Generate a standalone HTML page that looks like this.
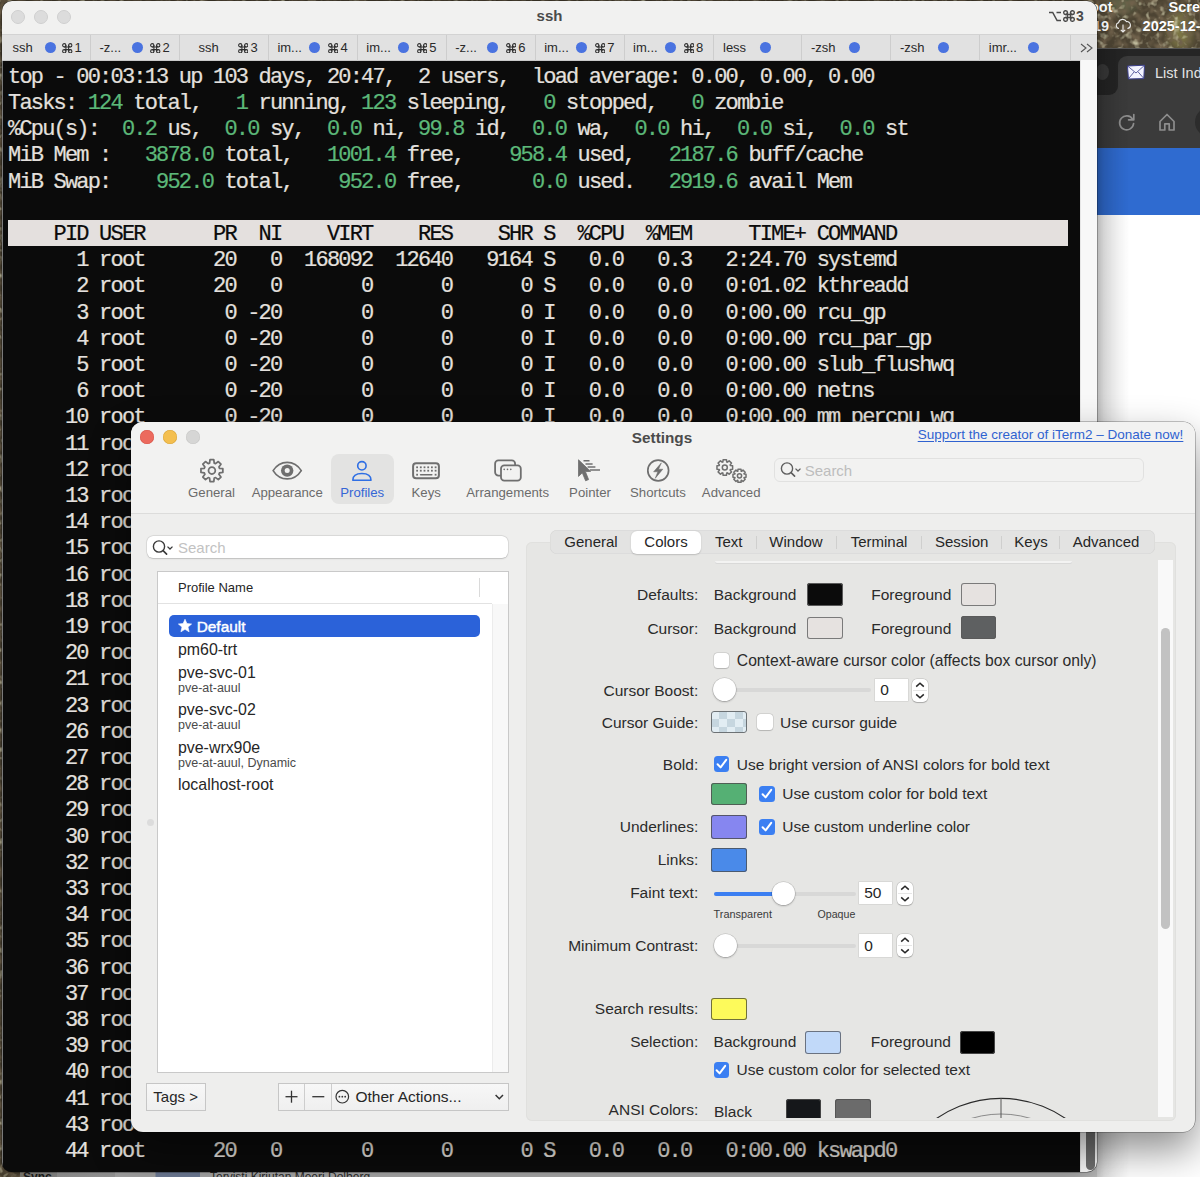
<!DOCTYPE html>
<html><head><meta charset="utf-8">
<style>
*{margin:0;padding:0;box-sizing:border-box}
html,body{width:1200px;height:1177px;overflow:hidden;background:#6b6a55}
body{position:relative;font-family:"Liberation Sans",sans-serif}
.abs{position:absolute}
/* wallpaper */
#wall{position:absolute;left:0;top:0;width:1200px;height:1177px}
#browser{position:absolute;left:1090px;top:48px;width:120px;height:1129px;background:#fff;border-top:1px solid #575757;overflow:hidden}
#btabs{position:absolute;left:0;top:0;width:120px;height:47px;background:#252525}
#btab{position:absolute;left:28px;top:7px;width:100px;height:50px;background:#3b3b3b;border-radius:9px 0 0 0}
#bfoot{position:absolute;left:0;top:30px;width:28px;height:17px;background:#3b3b3b}
#bfoot2{position:absolute;left:0;top:0px;width:28px;height:46px;background:#252525;border-radius:0 0 9px 0}
#btool{position:absolute;left:0;top:46px;width:120px;height:53px;background:#3b3b3b}
#bblue{position:absolute;left:0;top:98.6px;width:120px;height:67px;background:#2f6bd0}
#bottomstrip{position:absolute;left:20px;top:1165px;width:1077px;height:12px;background:linear-gradient(90deg,#8d8a80 0,#9a9a9a 37px,#a9a9a9 37px,#b4b4b4 95px,#c4c4c4 95px,#c4c4c4 135px,#8595b5 136px,#8595b5 180px,#c9c9c9 180px)}
/* terminal window */
#term{position:absolute;left:2px;top:1px;width:1095px;height:1170.5px;border-radius:10px;overflow:hidden;background:#0b0b0b;box-shadow:0 0 0 0.5px rgba(0,0,0,.5),0 10px 30px rgba(0,0,0,.3)}
#ttitle{position:absolute;left:0;top:0;width:100%;height:33px;background:#f1f1f0}
#ttabs{position:absolute;left:0;top:33px;width:100%;height:27px;background:#e1e1e1;border-top:1px solid #d3d3d3;border-bottom:1px solid #c9c9c9}
.tl{position:absolute;top:9px;width:14px;height:14px;border-radius:50%;background:#dcdcdc;border:1px solid #cfcfcf}
#tname{position:absolute;left:0;top:6px;width:1095px;text-align:center;font-weight:bold;font-size:15px;line-height:17px;color:#4a4a4a}
#tshort{position:absolute;left:1084px;top:8.5px;font-size:14px;line-height:14px;font-weight:bold;color:#4a4a4a}
.tab{position:absolute;top:0;height:26px;font-size:13px;color:#2a2a2a;border-left:1px solid #cdcdcd}
.tab span{position:absolute;top:5px;white-space:nowrap}
.dot{position:absolute;top:7px;width:11px;height:11px;border-radius:50%;background:#4a73e0}
#tcontent{position:absolute;left:0;top:60px;width:1078px;height:1111px;background:#0b0b0b}
#tscroll{position:absolute;left:1078px;top:59px;width:17px;height:1112px;background:#f8f8f8;border-left:1px solid #e6e6e6}
#tthumb{position:absolute;left:5px;bottom:2px;width:9px;height:90px;border-radius:5px;background:#6f6f6f}
.r{position:absolute;left:6px;height:26.2px;line-height:29.2px;-webkit-text-stroke:0.22px currentColor;white-space:pre;font-family:"Liberation Mono",monospace;font-size:22px;letter-spacing:-1.813px;color:#e4e0de}
.r b{font-weight:normal;color:#5cb879}
.r.hd{background:#e4e0de;color:#0b0b0b;width:1060px}
</style></head><body>
<svg id="wall" width="1200" height="1177" viewBox="0 0 1200 1177"><defs><filter id="bl"><feGaussianBlur stdDeviation="5"/></filter><filter id="tx1" x="0" y="0" width="100%" height="100%"><feTurbulence type="fractalNoise" baseFrequency="0.12" numOctaves="2" seed="3"/><feColorMatrix type="matrix" values="0 0 0 0 0.16  0 0 0 0 0.12  0 0 0 0 0.07  0 0 0 3 -1.2"/></filter><filter id="tx2" x="0" y="0" width="100%" height="100%"><feTurbulence type="fractalNoise" baseFrequency="0.15" numOctaves="2" seed="11"/><feColorMatrix type="matrix" values="0 0 0 0 0.72  0 0 0 0 0.7  0 0 0 0 0.48  0 0 0 2.6 -1.4"/></filter></defs><rect width="1200" height="1177" fill="#4d4433"/><g filter="url(#bl)"><ellipse cx="1180" cy="30" rx="12" ry="20" fill="#9a9550" opacity=".6"/><ellipse cx="1122" cy="4" rx="14" ry="8" fill="#607250" opacity=".7"/></g><rect width="1200" height="1177" filter="url(#tx1)"/><rect width="1200" height="1177" filter="url(#tx2)"/></svg>
<div id="browser"><div id="btool"></div><div id="btabs"><div id="btab"></div></div><div id="bfoot"></div><div id="bfoot2"></div><div id="bblue"></div><div style="position:absolute;left:6px;top:15px;width:13px;height:16px;border-radius:50%;background:#3a3a3a"></div>
<svg style="position:absolute;left:36px;top:15px" width="20" height="16" viewBox="0 0 20 16"><path d="M1.5 2 L18.5 1.2 L17.8 14.6 L2.4 15 Z" fill="#f4f4ff" stroke="#3a3e8a" stroke-width="1"/><path d="M1.8 2.2 L10 9 L18.3 1.5 M2.4 14.8 L8 8 M17.8 14.4 L12 7.8" fill="none" stroke="#3a3e8a" stroke-width="0.8"/></svg>
<div style="position:absolute;left:65px;top:17px;font-size:14.5px;line-height:14.5px;color:#e3e3e3;white-space:nowrap">List Index</div>
<svg style="position:absolute;left:26px;top:62px" width="22" height="22" viewBox="0 0 22 22"><path d="M16.6 8.2 A7 7 0 1 0 17.6 12.5" fill="none" stroke="#8d8d8d" stroke-width="1.7" stroke-linecap="round"/><path d="M17.8 3.6 L17.8 8.8 L12.6 8.8" fill="none" stroke="#8d8d8d" stroke-width="1.7" stroke-linejoin="round" stroke-linecap="round"/></svg>
<svg style="position:absolute;left:66px;top:62px" width="22" height="22" viewBox="0 0 22 22"><path d="M4 10.5 L11 3.5 L18 10.5 L18 19 L13.2 19 L13.2 12.8 L8.8 12.8 L8.8 19 L4 19 Z" fill="none" stroke="#8d8d8d" stroke-width="1.7" stroke-linejoin="round"/></svg>
<div style="position:absolute;left:105px;top:58px;width:40px;height:30px;border-radius:15px;background:#2c2c2c"></div>
<div style="position:absolute;left:0;top:0;width:40px;height:1129px;background:linear-gradient(90deg,rgba(0,0,0,.22),rgba(0,0,0,.08) 35%,rgba(0,0,0,0))"></div>
</div>
<div style="position:absolute;left:1090px;top:0px;font-size:14.5px;line-height:14.5px;font-weight:bold;color:#fff;white-space:nowrap;text-shadow:0 0 1px rgba(0,0,0,.5)">oot</div>
<div style="position:absolute;left:1168.5px;top:0px;font-size:14.5px;line-height:14.5px;font-weight:bold;color:#fff;white-space:nowrap;text-shadow:0 0 1px rgba(0,0,0,.5)">Screenshot</div>
<div style="position:absolute;left:1093px;top:19px;font-size:14.5px;line-height:14.5px;font-weight:bold;color:#fff;white-space:nowrap;text-shadow:0 0 1px rgba(0,0,0,.5)">19</div>
<div style="position:absolute;left:1142.6px;top:19px;font-size:14.5px;line-height:14.5px;font-weight:bold;color:#fff;white-space:nowrap;text-shadow:0 0 1px rgba(0,0,0,.5)">2025-12-19</div>
<svg style="position:absolute;left:1115px;top:18px" width="16" height="15" viewBox="0 0 16 15"><path d="M4 10.5 A3 3 0 0 1 3.6 4.6 A4.2 4.2 0 0 1 11.4 3.6 A3.2 3.2 0 0 1 12.4 10.5" fill="none" stroke="#eee" stroke-width="1.1"/><path d="M8 6.5 L8 14 M5.8 11.8 L8 14 L10.2 11.8" fill="none" stroke="#eee" stroke-width="1.1"/></svg>
<div id="bottomstrip"><div style="position:absolute;left:3px;top:6px;font-size:12px;line-height:12px;font-weight:bold;color:#222">Sync</div><div style="position:absolute;left:190px;top:6px;font-size:12px;line-height:12px;color:#333;white-space:nowrap">Tervisti Kirjutan Meeri Dolberg</div></div>

<div id="term">
 <div id="ttitle">
  <div class="tl" style="left:9px"></div><div class="tl" style="left:32px"></div><div class="tl" style="left:55px"></div>
  <div id="tname">ssh</div>
  <div id="tshort"><svg style="position:absolute;left:-38px;top:1px" width="14" height="11" viewBox="0 0 13 11"><path d="M0.5 1.5 H4.2 L8.6 9.5 H12.5 M8 1.5 H12.5" fill="none" stroke="#4a4a4a" stroke-width="1.5"/></svg><svg style="position:absolute;left:-23.5px;top:0.5px" width="12.0" height="12.0" viewBox="0 0 14 14"><g fill="none" stroke="#4a4a4a" stroke-width="1.63"><path d="M5.20 2.80V11.20M8.80 2.80V11.20M2.80 5.20H11.20M2.80 8.80H11.20"/><circle cx="3.00" cy="3.00" r="2.20"/><circle cx="11.00" cy="3.00" r="2.20"/><circle cx="3.00" cy="11.00" r="2.20"/><circle cx="11.00" cy="11.00" r="2.20"/></g></svg><span style="position:absolute;left:-10px;top:-1px">3</span></div>
 </div>
 <div id="ttabs"><div class="tab" style="left:-0.9px;width:88.9px"><span style="left:10.5px">ssh</span><i class="dot" style="left:42.5px"></i><svg style="position:absolute;left:60.0px;top:7.5px" width="10.5" height="10.5" viewBox="0 0 14 14"><g fill="none" stroke="#2f2f2f" stroke-width="1.40"><path d="M5.20 2.80V11.20M8.80 2.80V11.20M2.80 5.20H11.20M2.80 8.80H11.20"/><circle cx="3.00" cy="3.00" r="2.20"/><circle cx="11.00" cy="3.00" r="2.20"/><circle cx="3.00" cy="11.00" r="2.20"/><circle cx="11.00" cy="11.00" r="2.20"/></g></svg><span style="left:72.5px">1</span></div>
<div class="tab" style="left:88.0px;width:88.9px"><span style="left:8.5px">-z...</span><i class="dot" style="left:40.5px"></i><svg style="position:absolute;left:59.0px;top:7.5px" width="10.5" height="10.5" viewBox="0 0 14 14"><g fill="none" stroke="#2f2f2f" stroke-width="1.40"><path d="M5.20 2.80V11.20M8.80 2.80V11.20M2.80 5.20H11.20M2.80 8.80H11.20"/><circle cx="3.00" cy="3.00" r="2.20"/><circle cx="11.00" cy="3.00" r="2.20"/><circle cx="3.00" cy="11.00" r="2.20"/><circle cx="11.00" cy="11.00" r="2.20"/></g></svg><span style="left:71.5px">2</span></div>
<div class="tab" style="left:176.9px;width:88.9px"><span style="left:18.5px">ssh</span><svg style="position:absolute;left:58.0px;top:7.5px" width="10.5" height="10.5" viewBox="0 0 14 14"><g fill="none" stroke="#2f2f2f" stroke-width="1.40"><path d="M5.20 2.80V11.20M8.80 2.80V11.20M2.80 5.20H11.20M2.80 8.80H11.20"/><circle cx="3.00" cy="3.00" r="2.20"/><circle cx="11.00" cy="3.00" r="2.20"/><circle cx="3.00" cy="11.00" r="2.20"/><circle cx="11.00" cy="11.00" r="2.20"/></g></svg><span style="left:70.5px">3</span></div>
<div class="tab" style="left:265.9px;width:88.9px"><span style="left:8.5px">im...</span><i class="dot" style="left:40.5px"></i><svg style="position:absolute;left:59.0px;top:7.5px" width="10.5" height="10.5" viewBox="0 0 14 14"><g fill="none" stroke="#2f2f2f" stroke-width="1.40"><path d="M5.20 2.80V11.20M8.80 2.80V11.20M2.80 5.20H11.20M2.80 8.80H11.20"/><circle cx="3.00" cy="3.00" r="2.20"/><circle cx="11.00" cy="3.00" r="2.20"/><circle cx="3.00" cy="11.00" r="2.20"/><circle cx="11.00" cy="11.00" r="2.20"/></g></svg><span style="left:71.5px">4</span></div>
<div class="tab" style="left:354.8px;width:88.9px"><span style="left:8.5px">im...</span><i class="dot" style="left:40.5px"></i><svg style="position:absolute;left:59.0px;top:7.5px" width="10.5" height="10.5" viewBox="0 0 14 14"><g fill="none" stroke="#2f2f2f" stroke-width="1.40"><path d="M5.20 2.80V11.20M8.80 2.80V11.20M2.80 5.20H11.20M2.80 8.80H11.20"/><circle cx="3.00" cy="3.00" r="2.20"/><circle cx="11.00" cy="3.00" r="2.20"/><circle cx="3.00" cy="11.00" r="2.20"/><circle cx="11.00" cy="11.00" r="2.20"/></g></svg><span style="left:71.5px">5</span></div>
<div class="tab" style="left:443.7px;width:88.9px"><span style="left:8.5px">-z...</span><i class="dot" style="left:40.5px"></i><svg style="position:absolute;left:59.0px;top:7.5px" width="10.5" height="10.5" viewBox="0 0 14 14"><g fill="none" stroke="#2f2f2f" stroke-width="1.40"><path d="M5.20 2.80V11.20M8.80 2.80V11.20M2.80 5.20H11.20M2.80 8.80H11.20"/><circle cx="3.00" cy="3.00" r="2.20"/><circle cx="11.00" cy="3.00" r="2.20"/><circle cx="3.00" cy="11.00" r="2.20"/><circle cx="11.00" cy="11.00" r="2.20"/></g></svg><span style="left:71.5px">6</span></div>
<div class="tab" style="left:532.7px;width:88.9px"><span style="left:8.5px">im...</span><i class="dot" style="left:40.5px"></i><svg style="position:absolute;left:59.0px;top:7.5px" width="10.5" height="10.5" viewBox="0 0 14 14"><g fill="none" stroke="#2f2f2f" stroke-width="1.40"><path d="M5.20 2.80V11.20M8.80 2.80V11.20M2.80 5.20H11.20M2.80 8.80H11.20"/><circle cx="3.00" cy="3.00" r="2.20"/><circle cx="11.00" cy="3.00" r="2.20"/><circle cx="3.00" cy="11.00" r="2.20"/><circle cx="11.00" cy="11.00" r="2.20"/></g></svg><span style="left:71.5px">7</span></div>
<div class="tab" style="left:621.6px;width:88.9px"><span style="left:8.5px">im...</span><i class="dot" style="left:40.5px"></i><svg style="position:absolute;left:59.0px;top:7.5px" width="10.5" height="10.5" viewBox="0 0 14 14"><g fill="none" stroke="#2f2f2f" stroke-width="1.40"><path d="M5.20 2.80V11.20M8.80 2.80V11.20M2.80 5.20H11.20M2.80 8.80H11.20"/><circle cx="3.00" cy="3.00" r="2.20"/><circle cx="11.00" cy="3.00" r="2.20"/><circle cx="3.00" cy="11.00" r="2.20"/><circle cx="11.00" cy="11.00" r="2.20"/></g></svg><span style="left:71.5px">8</span></div>
<div class="tab" style="left:710.5px;width:88.9px"><span style="left:9.5px">less</span><i class="dot" style="left:46.5px"></i></div>
<div class="tab" style="left:799.4px;width:88.9px"><span style="left:8.5px">-zsh</span><i class="dot" style="left:46.5px"></i></div>
<div class="tab" style="left:888.4px;width:88.9px"><span style="left:8.5px">-zsh</span><i class="dot" style="left:46.5px"></i></div>
<div class="tab" style="left:977.3px;width:88.9px"><span style="left:8.5px">imr...</span><i class="dot" style="left:47.5px"></i></div>
<div class="tab" style="left:1067.7px;width:30px"><svg style="position:absolute;left:9.5px;top:8px" width="14" height="10" viewBox="0 0 14 10"><path d="M1 1 L6 5 L1 9 M7 1 L12 5 L7 9" fill="none" stroke="#555" stroke-width="1.1"/></svg></div></div>
 <div id="tcontent">
<div class="r" style="top:1.8px">top - 00:03:13 up 103 days, 20:47,  2 users,  load average: 0.00, 0.00, 0.00</div>
<div class="r" style="top:28.0px">Tasks: <b>124</b> total,   <b>1</b> running, <b>123</b> sleeping,   <b>0</b> stopped,   <b>0</b> zombie</div>
<div class="r" style="top:54.2px">%Cpu(s): <b> 0.2</b> us, <b> 0.0</b> sy, <b> 0.0</b> ni, <b>99.8</b> id, <b> 0.0</b> wa, <b> 0.0</b> hi, <b> 0.0</b> si, <b> 0.0</b> st</div>
<div class="r" style="top:80.4px">MiB Mem : <b>  3878.0</b> total, <b>  1001.4</b> free, <b>   958.4</b> used, <b>  2187.6</b> buff/cache</div>
<div class="r" style="top:106.6px">MiB Swap: <b>   952.0</b> total, <b>   952.0</b> free, <b>     0.0</b> used. <b>  2919.6</b> avail Mem</div>
<div class="r" style="top:132.8px"></div>
<div class="r hd" style="top:159.0px">    PID USER      PR  NI    VIRT    RES    SHR S  %CPU  %MEM     TIME+ COMMAND</div>
<div class="r" style="top:185.2px">      1 root      20   0  168092  12640   9164 S   0.0   0.3   2:24.70 systemd</div>
<div class="r" style="top:211.4px">      2 root      20   0       0      0      0 S   0.0   0.0   0:01.02 kthreadd</div>
<div class="r" style="top:237.6px">      3 root       0 -20       0      0      0 I   0.0   0.0   0:00.00 rcu_gp</div>
<div class="r" style="top:263.8px">      4 root       0 -20       0      0      0 I   0.0   0.0   0:00.00 rcu_par_gp</div>
<div class="r" style="top:290.0px">      5 root       0 -20       0      0      0 I   0.0   0.0   0:00.00 slub_flushwq</div>
<div class="r" style="top:316.2px">      6 root       0 -20       0      0      0 I   0.0   0.0   0:00.00 netns</div>
<div class="r" style="top:342.4px">     10 root       0 -20       0      0      0 I   0.0   0.0   0:00.00 mm_percpu_wq</div>
<div class="r" style="top:368.6px">     11 root      20   0       0      0      0 S   0.0   0.0   0:00.00 kauditd</div>
<div class="r" style="top:394.8px">     12 root      20   0       0      0      0 S   0.0   0.0   0:00.00 kauditd</div>
<div class="r" style="top:421.0px">     13 root      20   0       0      0      0 S   0.0   0.0   0:00.00 kauditd</div>
<div class="r" style="top:447.2px">     14 root      20   0       0      0      0 S   0.0   0.0   0:00.00 kauditd</div>
<div class="r" style="top:473.4px">     15 root      20   0       0      0      0 S   0.0   0.0   0:00.00 kauditd</div>
<div class="r" style="top:499.6px">     16 root      20   0       0      0      0 S   0.0   0.0   0:00.00 kauditd</div>
<div class="r" style="top:525.8px">     18 root      20   0       0      0      0 S   0.0   0.0   0:00.00 kauditd</div>
<div class="r" style="top:552.0px">     19 root      20   0       0      0      0 S   0.0   0.0   0:00.00 kauditd</div>
<div class="r" style="top:578.2px">     20 root      20   0       0      0      0 S   0.0   0.0   0:00.00 kauditd</div>
<div class="r" style="top:604.4px">     21 root      20   0       0      0      0 S   0.0   0.0   0:00.00 kauditd</div>
<div class="r" style="top:630.6px">     23 root      20   0       0      0      0 S   0.0   0.0   0:00.00 kauditd</div>
<div class="r" style="top:656.8px">     26 root      20   0       0      0      0 S   0.0   0.0   0:00.00 kauditd</div>
<div class="r" style="top:683.0px">     27 root      20   0       0      0      0 S   0.0   0.0   0:00.00 kauditd</div>
<div class="r" style="top:709.2px">     28 root      20   0       0      0      0 S   0.0   0.0   0:00.00 kauditd</div>
<div class="r" style="top:735.4px">     29 root      20   0       0      0      0 S   0.0   0.0   0:00.00 kauditd</div>
<div class="r" style="top:761.6px">     30 root      20   0       0      0      0 S   0.0   0.0   0:00.00 kauditd</div>
<div class="r" style="top:787.8px">     32 root      20   0       0      0      0 S   0.0   0.0   0:00.00 kauditd</div>
<div class="r" style="top:814.0px">     33 root      20   0       0      0      0 S   0.0   0.0   0:00.00 kauditd</div>
<div class="r" style="top:840.2px">     34 root      20   0       0      0      0 S   0.0   0.0   0:00.00 kauditd</div>
<div class="r" style="top:866.4px">     35 root      20   0       0      0      0 S   0.0   0.0   0:00.00 kauditd</div>
<div class="r" style="top:892.6px">     36 root      20   0       0      0      0 S   0.0   0.0   0:00.00 kauditd</div>
<div class="r" style="top:918.8px">     37 root      20   0       0      0      0 S   0.0   0.0   0:00.00 kauditd</div>
<div class="r" style="top:945.0px">     38 root      20   0       0      0      0 S   0.0   0.0   0:00.00 kauditd</div>
<div class="r" style="top:971.2px">     39 root      20   0       0      0      0 S   0.0   0.0   0:00.00 kauditd</div>
<div class="r" style="top:997.4px">     40 root      20   0       0      0      0 S   0.0   0.0   0:00.00 kauditd</div>
<div class="r" style="top:1023.6px">     41 root      20   0       0      0      0 S   0.0   0.0   0:00.00 kauditd</div>
<div class="r" style="top:1049.8px">     43 root      20   0       0      0      0 S   0.0   0.0   0:00.00 kauditd</div>
<div class="r" style="top:1076.0px">     44 root      20   0       0      0      0 S   0.0   0.0   0:00.00 kswapd0</div>
 </div>
 <div style="position:absolute;left:0;top:60px;width:1px;height:1110px;background:#7a7a7a"></div>
 <div id="tscroll"><div id="tthumb"></div></div>
</div>

<div id="set" style="position:absolute;left:131px;top:422px;width:1064px;height:710px;border-radius:12px;overflow:hidden;background:#eeeeed;box-shadow:0 0 0 0.5px rgba(0,0,0,.45),0 18px 40px rgba(0,0,0,.45)">
<div style="position:absolute;left:0.0px;top:0.0px;width:1064.0px;height:91.5px;background:#f2f2f1;border-bottom:1px solid #dcdcdb"></div>
<div style="position:absolute;left:9.0px;top:8.4px;width:14.0px;height:14.0px;background:#ec6a5e;border-radius:50%;box-shadow:inset 0 0 0 0.5px #d8574b"></div>
<div style="position:absolute;left:32.0px;top:8.4px;width:14.0px;height:14.0px;background:#f4bf4f;border-radius:50%;box-shadow:inset 0 0 0 0.5px #d9a63c"></div>
<div style="position:absolute;left:54.6px;top:8.4px;width:14.0px;height:14.0px;background:#d6d6d5;border-radius:50%;box-shadow:inset 0 0 0 0.5px #c8c8c7"></div>
<div style="position:absolute;top:7.5px;font-size:15.30px;line-height:15.30px;color:#4b4b4b;white-space:nowrap;font-weight:bold;left:531.0px;width:0;display:flex;justify-content:center;">Settings</div>
<div style="position:absolute;top:5.6px;font-size:13.50px;line-height:13.50px;color:#2f62d0;white-space:nowrap;left:786.7px;text-decoration:underline;text-underline-offset:1.5px">Support the creator of iTerm2 – Donate now!</div>
<div style="position:absolute;left:200.3px;top:31.8px;width:62.5px;height:50.7px;background:#e3e3e2;border-radius:8px"></div>
<div style="position:absolute;top:63.8px;font-size:13.20px;line-height:13.20px;color:#6b6b6b;white-space:nowrap;left:80.5px;width:0;display:flex;justify-content:center;">General</div>
<div style="position:absolute;top:63.8px;font-size:13.20px;line-height:13.20px;color:#6b6b6b;white-space:nowrap;left:156.2px;width:0;display:flex;justify-content:center;">Appearance</div>
<div style="position:absolute;top:63.8px;font-size:13.20px;line-height:13.20px;color:#3466d6;white-space:nowrap;left:231.2px;width:0;display:flex;justify-content:center;">Profiles</div>
<div style="position:absolute;top:63.8px;font-size:13.20px;line-height:13.20px;color:#6b6b6b;white-space:nowrap;left:295.2px;width:0;display:flex;justify-content:center;">Keys</div>
<div style="position:absolute;top:63.8px;font-size:13.20px;line-height:13.20px;color:#6b6b6b;white-space:nowrap;left:376.7px;width:0;display:flex;justify-content:center;">Arrangements</div>
<div style="position:absolute;top:63.8px;font-size:13.20px;line-height:13.20px;color:#6b6b6b;white-space:nowrap;left:459.0px;width:0;display:flex;justify-content:center;">Pointer</div>
<div style="position:absolute;top:63.8px;font-size:13.20px;line-height:13.20px;color:#6b6b6b;white-space:nowrap;left:526.9px;width:0;display:flex;justify-content:center;">Shortcuts</div>
<div style="position:absolute;top:63.8px;font-size:13.20px;line-height:13.20px;color:#6b6b6b;white-space:nowrap;left:600.2px;width:0;display:flex;justify-content:center;">Advanced</div>
<svg style="position:absolute;left:0;top:0" width="1064" height="120" viewBox="131 422 1064 120"><path d="M209.57 463.05L210.02 459.66L213.78 459.66L214.23 463.05A7.90 7.90 0 0 1 215.59 463.61L218.31 461.54L220.96 464.19L218.89 466.91A7.90 7.90 0 0 1 219.45 468.27L222.84 468.72L222.84 472.48L219.45 472.93A7.90 7.90 0 0 1 218.89 474.29L220.96 477.01L218.31 479.66L215.59 477.59A7.90 7.90 0 0 1 214.23 478.15L213.78 481.54L210.02 481.54L209.57 478.15A7.90 7.90 0 0 1 208.21 477.59L205.49 479.66L202.84 477.01L204.91 474.29A7.90 7.90 0 0 1 204.35 472.93L200.96 472.48L200.96 468.72L204.35 468.27A7.90 7.90 0 0 1 204.91 466.91L202.84 464.19L205.49 461.54L208.21 463.61A7.90 7.90 0 0 1 209.57 463.05Z" fill="none" stroke="#6f6f6f" stroke-width="1.75" stroke-linejoin="round"/><circle cx="211.90" cy="470.60" r="3.40" fill="none" stroke="#6f6f6f" stroke-width="1.75"/><path d="M273.1 470.6 C276.6 465 281.4 462.3 287.2 462.3 C293 462.3 297.8 465 301.3 470.6 C297.8 476.2 293 478.9 287.2 478.9 C281.4 478.9 276.6 476.2 273.1 470.6Z" fill="none" stroke="#6f6f6f" stroke-width="1.7" stroke-linejoin="round"/><circle cx="287.2" cy="470.6" r="6.2" fill="#6f6f6f"/><circle cx="287.2" cy="470.6" r="2.5" fill="#f2f2f1"/><circle cx="361.9" cy="465.8" r="4.2" fill="none" stroke="#2f6fe4" stroke-width="1.6"/><path d="M352.8 480.2 Q352.8 473.5 361.9 473.5 Q371 473.5 371 480.2Z" fill="none" stroke="#2f6fe4" stroke-width="1.6" stroke-linejoin="round"/><rect x="413.1" y="463.2" width="25.8" height="15" rx="3" fill="none" stroke="#6f6f6f" stroke-width="2"/><rect x="416.20" y="466.40" width="1.8" height="1.8" fill="#6f6f6f"/><rect x="419.90" y="466.40" width="1.8" height="1.8" fill="#6f6f6f"/><rect x="423.60" y="466.40" width="1.8" height="1.8" fill="#6f6f6f"/><rect x="427.30" y="466.40" width="1.8" height="1.8" fill="#6f6f6f"/><rect x="431.00" y="466.40" width="1.8" height="1.8" fill="#6f6f6f"/><rect x="434.70" y="466.40" width="1.8" height="1.8" fill="#6f6f6f"/><rect x="416.20" y="469.80" width="1.8" height="1.8" fill="#6f6f6f"/><rect x="419.90" y="469.80" width="1.8" height="1.8" fill="#6f6f6f"/><rect x="423.60" y="469.80" width="1.8" height="1.8" fill="#6f6f6f"/><rect x="427.30" y="469.80" width="1.8" height="1.8" fill="#6f6f6f"/><rect x="431.00" y="469.80" width="1.8" height="1.8" fill="#6f6f6f"/><rect x="434.70" y="469.80" width="1.8" height="1.8" fill="#6f6f6f"/><rect x="416.2" y="473.8" width="1.8" height="1.8" fill="#6f6f6f"/><rect x="434.7" y="473.8" width="1.8" height="1.8" fill="#6f6f6f"/><rect x="419.8" y="473.9" width="12.8" height="1.6" rx=".8" fill="#6f6f6f"/><rect x="495.1" y="460.4" width="20" height="15.2" rx="3.3" fill="none" stroke="#6f6f6f" stroke-width="1.8"/><rect x="501" y="465.4" width="19.8" height="15.3" rx="3.3" fill="#f2f2f1" stroke="#6f6f6f" stroke-width="1.8"/><circle cx="504.20" cy="469.4" r=".8" fill="#6f6f6f"/><circle cx="507.50" cy="469.4" r=".8" fill="#6f6f6f"/><circle cx="510.80" cy="469.4" r=".8" fill="#6f6f6f"/><path d="M578.5 459.8 L578.5 476.4 L582.3 472.8 L585.6 480.8 L588.6 479.6 L585.4 471.6 L590.6 471.4Z" fill="#6f6f6f" stroke="#6f6f6f" stroke-width="0.8" stroke-linejoin="round"/><line x1="583.5" y1="460.8" x2="589.5" y2="460.8" stroke="#6f6f6f" stroke-width="1.5"/><line x1="585.5" y1="463.9" x2="592.6" y2="463.9" stroke="#6f6f6f" stroke-width="1.5"/><line x1="587.6" y1="467.0" x2="595.4" y2="467.0" stroke="#6f6f6f" stroke-width="1.5"/><line x1="589.8" y1="470.1" x2="600.0" y2="470.1" stroke="#6f6f6f" stroke-width="1.5"/><circle cx="658.2" cy="470.5" r="10.4" fill="none" stroke="#6f6f6f" stroke-width="1.7"/><path d="M661.4 462.8 L653.6 471.8 L657.8 471.8 L655.2 478.4 L662.8 469.2 L658.6 469.2Z" fill="#6f6f6f" stroke="#6f6f6f" stroke-width=".5" stroke-linejoin="round"/><path d="M722.89 461.92L723.13 459.68L726.47 459.68L726.71 461.92A5.90 5.90 0 0 1 727.39 462.20L729.15 460.79L731.51 463.15L730.10 464.91A5.90 5.90 0 0 1 730.38 465.59L732.62 465.83L732.62 469.17L730.38 469.41A5.90 5.90 0 0 1 730.10 470.09L731.51 471.85L729.15 474.21L727.39 472.80A5.90 5.90 0 0 1 726.71 473.08L726.47 475.32L723.13 475.32L722.89 473.08A5.90 5.90 0 0 1 722.21 472.80L720.45 474.21L718.09 471.85L719.50 470.09A5.90 5.90 0 0 1 719.22 469.41L716.98 469.17L716.98 465.83L719.22 465.59A5.90 5.90 0 0 1 719.50 464.91L718.09 463.15L720.45 460.79L722.21 462.20A5.90 5.90 0 0 1 722.89 461.92Z" fill="none" stroke="#6f6f6f" stroke-width="1.50" stroke-linejoin="round"/><circle cx="724.80" cy="467.50" r="2.50" fill="none" stroke="#6f6f6f" stroke-width="1.50"/><path d="M737.82 471.20L737.97 469.28L741.03 469.28L741.18 471.20A4.90 4.90 0 0 1 741.57 471.36L743.03 470.11L745.19 472.27L743.94 473.73A4.90 4.90 0 0 1 744.10 474.12L746.02 474.27L746.02 477.33L744.10 477.48A4.90 4.90 0 0 1 743.94 477.87L745.19 479.33L743.03 481.49L741.57 480.24A4.90 4.90 0 0 1 741.18 480.40L741.03 482.32L737.97 482.32L737.82 480.40A4.90 4.90 0 0 1 737.43 480.24L735.97 481.49L733.81 479.33L735.06 477.87A4.90 4.90 0 0 1 734.90 477.48L732.98 477.33L732.98 474.27L734.90 474.12A4.90 4.90 0 0 1 735.06 473.73L733.81 472.27L735.97 470.11L737.43 471.36A4.90 4.90 0 0 1 737.82 471.20Z" fill="none" stroke="#6f6f6f" stroke-width="1.50" stroke-linejoin="round"/><circle cx="739.50" cy="475.80" r="2.10" fill="none" stroke="#6f6f6f" stroke-width="1.50"/></svg>
<div style="position:absolute;left:643.0px;top:35.8px;width:369.6px;height:24.5px;background:#f2f2f1;border:1px solid #e1e1e0;border-radius:6px"></div>
<div style="position:absolute;top:40.8px;font-size:15.00px;line-height:15.00px;color:#bdbdbd;white-space:nowrap;left:673.7px;">Search</div>
<svg style="position:absolute;left:648px;top:38px" width="26" height="20" viewBox="0 0 26 20"><circle cx="8" cy="8.5" r="5.6" fill="none" stroke="#5f5f5f" stroke-width="1.4"/><line x1="12.1" y1="12.6" x2="15.6" y2="16.1" stroke="#5f5f5f" stroke-width="1.6" stroke-linecap="round"/><path d="M16.5 8.6 L19 11 L21.5 8.6" fill="none" stroke="#5f5f5f" stroke-width="1.3"/></svg>
<div style="position:absolute;left:16.0px;top:114.0px;width:361.0px;height:22.2px;background:#fff;border-radius:6px;box-shadow:0 0 0 0.5px rgba(0,0,0,.12),0 0.5px 1.5px rgba(0,0,0,.15)"></div>
<svg style="position:absolute;left:20px;top:116px" width="26" height="20" viewBox="0 0 26 20"><circle cx="8" cy="8.5" r="5.6" fill="none" stroke="#3a3a3a" stroke-width="1.4"/><line x1="12.1" y1="12.6" x2="15.6" y2="16.1" stroke="#3a3a3a" stroke-width="1.6" stroke-linecap="round"/><path d="M16.5 8.6 L19 11 L21.5 8.6" fill="none" stroke="#3a3a3a" stroke-width="1.3"/></svg>
<div style="position:absolute;top:118.3px;font-size:15.00px;line-height:15.00px;color:#c2c2c2;white-space:nowrap;left:47.0px;">Search</div>
<div style="position:absolute;left:25.5px;top:148.8px;width:352.5px;height:502.0px;background:#fff;border:1px solid #c9c9c9"></div>
<div style="position:absolute;left:360.5px;top:182.0px;width:16.5px;height:468.0px;background:#f8f8f8;border-left:1px solid #ececec"></div>
<div style="position:absolute;left:26.5px;top:181.0px;width:334.0px;height:1.0px;background:#e2e2e2"></div>
<div style="position:absolute;left:348.0px;top:156.0px;width:1.0px;height:19.0px;background:#dadada"></div>
<div style="position:absolute;top:159.4px;font-size:13.00px;line-height:13.00px;color:#262626;white-space:nowrap;left:47.0px;">Profile Name</div>
<div style="position:absolute;left:38.0px;top:193.2px;width:310.8px;height:22.2px;background:#2b62d9;border-radius:5px"></div>
<svg style="position:absolute;left:46.0px;top:196.0px" width="16" height="16" viewBox="0 0 16 16"><path d="M8 1.2 L9.9 5.6 L14.6 6 L11 9.1 L12.1 13.8 L8 11.3 L3.9 13.8 L5 9.1 L1.4 6 L6.1 5.6Z" fill="#fff" stroke="#fff" stroke-width=".6" stroke-linejoin="round"/></svg>
<div style="position:absolute;top:197.3px;font-size:15.40px;line-height:15.40px;color:#ffffff;white-space:nowrap;left:65.7px;-webkit-text-stroke:0.45px #fff">Default</div>
<div style="position:absolute;top:219.5px;font-size:15.90px;line-height:15.90px;color:#262626;white-space:nowrap;left:47.0px;">pm60-trt</div>
<div style="position:absolute;top:242.8px;font-size:15.90px;line-height:15.90px;color:#262626;white-space:nowrap;left:47.0px;">pve-svc-01</div>
<div style="position:absolute;top:259.7px;font-size:12.50px;line-height:12.50px;color:#4a4a4a;white-space:nowrap;left:47.0px;">pve-at-auul</div>
<div style="position:absolute;top:280.2px;font-size:15.90px;line-height:15.90px;color:#262626;white-space:nowrap;left:47.0px;">pve-svc-02</div>
<div style="position:absolute;top:297.4px;font-size:12.50px;line-height:12.50px;color:#4a4a4a;white-space:nowrap;left:47.0px;">pve-at-auul</div>
<div style="position:absolute;top:317.8px;font-size:15.90px;line-height:15.90px;color:#262626;white-space:nowrap;left:47.0px;">pve-wrx90e</div>
<div style="position:absolute;top:335.1px;font-size:12.50px;line-height:12.50px;color:#4a4a4a;white-space:nowrap;left:47.0px;">pve-at-auul, Dynamic</div>
<div style="position:absolute;top:355.2px;font-size:15.90px;line-height:15.90px;color:#262626;white-space:nowrap;left:47.0px;">localhost-root</div>
<div style="position:absolute;left:16.0px;top:396.5px;width:7.0px;height:7.0px;background:#dcdcdc;border-radius:50%"></div>
<div style="position:absolute;left:15.0px;top:660.7px;width:59.7px;height:28.0px;background:linear-gradient(#f7f7f7,#efefef);border:1px solid #c6c6c6"></div>
<div style="position:absolute;top:667.3px;font-size:15.00px;line-height:15.00px;color:#262626;white-space:nowrap;left:22.3px;">Tags &gt;</div>
<div style="position:absolute;left:147.3px;top:660.7px;width:230.4px;height:28.0px;background:linear-gradient(#f7f7f7,#efefef);border:1px solid #c6c6c6"></div>
<div style="position:absolute;left:173.0px;top:661.5px;width:1.0px;height:26.5px;background:#cdcdcd"></div>
<div style="position:absolute;left:199.7px;top:661.5px;width:1.0px;height:26.5px;background:#cdcdcd"></div>
<svg style="position:absolute;left:147.0px;top:661.0px" width="240" height="28" viewBox="278 1083 240 28"><line x1="285.5" y1="1096.7" x2="297.5" y2="1096.7" stroke="#333" stroke-width="1.3"/><line x1="291.5" y1="1090.7" x2="291.5" y2="1102.7" stroke="#333" stroke-width="1.3"/><line x1="312.3" y1="1096.7" x2="324.3" y2="1096.7" stroke="#333" stroke-width="1.3"/><circle cx="342.3" cy="1096.7" r="6.3" fill="none" stroke="#333" stroke-width="1.2"/><circle cx="339.4" cy="1096.7" r=".9" fill="#333"/><circle cx="342.3" cy="1096.7" r=".9" fill="#333"/><circle cx="345.2" cy="1096.7" r=".9" fill="#333"/><path d="M495.6 1095 L499.3 1098.7 L503 1095" fill="none" stroke="#333" stroke-width="1.5"/></svg>
<div style="position:absolute;top:666.9px;font-size:15.50px;line-height:15.50px;color:#262626;white-space:nowrap;left:224.5px;">Other Actions...</div>
<div style="position:absolute;left:395.3px;top:119.7px;width:650.2px;height:579.3px;background:#e6e6e4;border-radius:6px;box-shadow:inset 0 0 0 1px #e0e0de"></div>
<div style="position:absolute;left:584.0px;top:138.5px;width:357.0px;height:2.0px;background:#f3f3f2;border-radius:0 0 6px 6px;box-shadow:0 1px 0 #d9d9d8"></div>
<div style="position:absolute;left:1027.0px;top:138.4px;width:15.2px;height:556.9px;background:#f9f9f9"></div>
<div style="position:absolute;left:1030.3px;top:206.4px;width:8.9px;height:300.6px;background:#c2c2c2;border-radius:5px"></div>
<div style="position:absolute;left:418.6px;top:108.3px;width:605.4px;height:24.0px;background:#e3e3e2;border-radius:7px;box-shadow:inset 0 0 0 0.5px #d6d6d5"></div>
<div style="position:absolute;left:500.0px;top:108.7px;width:69.7px;height:23.3px;background:#fff;border-radius:6px;box-shadow:0 0.5px 1.5px rgba(0,0,0,.18)"></div>
<div style="position:absolute;left:624.5px;top:114.0px;width:1.0px;height:12.5px;background:#cfcfce"></div>
<div style="position:absolute;left:705.4px;top:114.0px;width:1.0px;height:12.5px;background:#cfcfce"></div>
<div style="position:absolute;left:790.2px;top:114.0px;width:1.0px;height:12.5px;background:#cfcfce"></div>
<div style="position:absolute;left:870.2px;top:114.0px;width:1.0px;height:12.5px;background:#cfcfce"></div>
<div style="position:absolute;left:927.8px;top:114.0px;width:1.0px;height:12.5px;background:#cfcfce"></div>
<div style="position:absolute;top:112.0px;font-size:15.00px;line-height:15.00px;color:#262626;white-space:nowrap;left:433.3px;">General</div>
<div style="position:absolute;top:112.0px;font-size:15.00px;line-height:15.00px;color:#262626;white-space:nowrap;left:513.3px;">Colors</div>
<div style="position:absolute;top:112.0px;font-size:15.00px;line-height:15.00px;color:#262626;white-space:nowrap;left:584.0px;">Text</div>
<div style="position:absolute;top:112.0px;font-size:15.00px;line-height:15.00px;color:#262626;white-space:nowrap;left:638.3px;">Window</div>
<div style="position:absolute;top:112.0px;font-size:15.00px;line-height:15.00px;color:#262626;white-space:nowrap;left:719.7px;">Terminal</div>
<div style="position:absolute;top:112.0px;font-size:15.00px;line-height:15.00px;color:#262626;white-space:nowrap;left:804.0px;">Session</div>
<div style="position:absolute;top:112.0px;font-size:15.00px;line-height:15.00px;color:#262626;white-space:nowrap;left:883.3px;">Keys</div>
<div style="position:absolute;top:112.0px;font-size:15.00px;line-height:15.00px;color:#262626;white-space:nowrap;left:941.7px;">Advanced</div>
<div style="position:absolute;top:165.1px;font-size:15.50px;line-height:15.50px;color:#2b2b2b;white-space:nowrap;right:496.8px;">Defaults:</div>
<div style="position:absolute;top:165.1px;font-size:15.50px;line-height:15.50px;color:#2b2b2b;white-space:nowrap;left:582.7px;">Background</div>
<div style="position:absolute;left:676.0px;top:161.3px;width:35.8px;height:22.7px;background:#0b0b0b;border-radius:3px;box-shadow:inset 0 0 0 1px #5a5a5a"></div>
<div style="position:absolute;top:165.1px;font-size:15.50px;line-height:15.50px;color:#2b2b2b;white-space:nowrap;left:740.2px;">Foreground</div>
<div style="position:absolute;left:830.2px;top:161.3px;width:35.2px;height:23.1px;background:#e6e2e0;border-radius:3px;box-shadow:inset 0 0 0 1px #7a7a7a"></div>
<div style="position:absolute;top:199.2px;font-size:15.50px;line-height:15.50px;color:#2b2b2b;white-space:nowrap;right:496.8px;">Cursor:</div>
<div style="position:absolute;top:199.2px;font-size:15.50px;line-height:15.50px;color:#2b2b2b;white-space:nowrap;left:582.7px;">Background</div>
<div style="position:absolute;left:676.0px;top:195.4px;width:35.8px;height:21.9px;background:#e6e2e0;border-radius:3px;box-shadow:inset 0 0 0 1px #7a7a7a"></div>
<div style="position:absolute;top:199.2px;font-size:15.50px;line-height:15.50px;color:#2b2b2b;white-space:nowrap;left:740.2px;">Foreground</div>
<div style="position:absolute;left:830.2px;top:194.4px;width:35.2px;height:22.8px;background:#5e6061;border-radius:3px;box-shadow:inset 0 0 0 1px #5a5a5a"></div>
<div style="position:absolute;left:582.7px;top:230.6px;width:15.5px;height:15.5px;background:#fff;border-radius:3.5px;box-shadow:0 0 0 0.5px rgba(0,0,0,.15),0 0.5px 1px rgba(0,0,0,.15)"></div>
<div style="position:absolute;top:230.5px;font-size:15.70px;line-height:15.70px;color:#2b2b2b;white-space:nowrap;left:605.8px;">Context-aware cursor color (affects box cursor only)</div>
<div style="position:absolute;top:260.5px;font-size:15.50px;line-height:15.50px;color:#2b2b2b;white-space:nowrap;right:496.8px;">Cursor Boost:</div>
<div style="position:absolute;left:582.6px;top:265.7px;width:157.4px;height:4.0px;background:#d8d8d7;border-radius:2px"></div>
<div style="position:absolute;left:582.2px;top:256.2px;width:23.0px;height:23.0px;background:#fff;border-radius:50%;box-shadow:0 0 0 0.5px rgba(0,0,0,.18),0 1px 2px rgba(0,0,0,.25)"></div>
<div style="position:absolute;left:743.8px;top:256.8px;width:33.6px;height:22.4px;background:#fff;box-shadow:0 0 0 0.5px rgba(0,0,0,.12)"></div><div style="position:absolute;top:260.1px;font-size:15.50px;line-height:15.50px;color:#262626;white-space:nowrap;left:749.3px;">0</div>
<div style="position:absolute;left:781.2px;top:256.6px;width:16.0px;height:23.0px;background:#fff;border-radius:5px;box-shadow:0 0 0 0.5px rgba(0,0,0,.15),0 0.5px 1px rgba(0,0,0,.2)"></div><svg style="position:absolute;left:781.2px;top:256.6px" width="16" height="23" viewBox="0 0 16 23"><path d="M4.2 7.6 L8 4.2 L11.8 7.6" fill="none" stroke="#262626" stroke-width="1.5"/><path d="M4.2 15.4 L8 18.8 L11.8 15.4" fill="none" stroke="#262626" stroke-width="1.5"/><line x1="1" y1="11.5" x2="15" y2="11.5" stroke="#e6e6e6" stroke-width="1"/></svg>
<div style="position:absolute;top:292.5px;font-size:15.50px;line-height:15.50px;color:#2b2b2b;white-space:nowrap;right:496.8px;">Cursor Guide:</div>
<div style="position:absolute;left:580.3px;top:288.7px;width:35.9px;height:22.8px;border-radius:3px;box-shadow:inset 0 0 0 1px #6d7275;background-color:#e2edf3;background-image:linear-gradient(45deg,#c6d6df 25%,transparent 25%,transparent 75%,#c6d6df 75%),linear-gradient(45deg,#c6d6df 25%,transparent 25%,transparent 75%,#c6d6df 75%);background-size:16px 16px;background-position:0 0,8px 8px"></div>
<div style="position:absolute;left:626.0px;top:292.0px;width:15.5px;height:15.5px;background:#fff;border-radius:3.5px;box-shadow:0 0 0 0.5px rgba(0,0,0,.15),0 0.5px 1px rgba(0,0,0,.15)"></div>
<div style="position:absolute;top:292.5px;font-size:15.50px;line-height:15.50px;color:#2b2b2b;white-space:nowrap;left:649.0px;">Use cursor guide</div>
<div style="position:absolute;top:334.9px;font-size:15.50px;line-height:15.50px;color:#2b2b2b;white-space:nowrap;right:496.8px;">Bold:</div>
<div style="position:absolute;left:582.7px;top:334.2px;width:15.5px;height:15.5px;background:#3b7ff2;border-radius:3.5px"></div><svg style="position:absolute;left:582.5px;top:334.0px" width="16" height="16" viewBox="0 0 16 16"><path d="M3.6 8.3 L6.6 11.4 L12.2 3.9" fill="none" stroke="#fff" stroke-width="2" stroke-linecap="round" stroke-linejoin="round"/></svg>
<div style="position:absolute;top:334.9px;font-size:15.50px;line-height:15.50px;color:#2b2b2b;white-space:nowrap;left:605.8px;">Use bright version of ANSI colors for bold text</div>
<div style="position:absolute;left:580.3px;top:360.6px;width:35.9px;height:22.9px;background:#55b074;border-radius:3px;box-shadow:inset 0 0 0 1px #4f5f55"></div>
<div style="position:absolute;left:628.3px;top:364.3px;width:15.5px;height:15.5px;background:#3b7ff2;border-radius:3.5px"></div><svg style="position:absolute;left:628.1px;top:364.1px" width="16" height="16" viewBox="0 0 16 16"><path d="M3.6 8.3 L6.6 11.4 L12.2 3.9" fill="none" stroke="#fff" stroke-width="2" stroke-linecap="round" stroke-linejoin="round"/></svg>
<div style="position:absolute;top:363.9px;font-size:15.50px;line-height:15.50px;color:#2b2b2b;white-space:nowrap;left:651.2px;">Use custom color for bold text</div>
<div style="position:absolute;top:396.9px;font-size:15.50px;line-height:15.50px;color:#2b2b2b;white-space:nowrap;right:496.8px;">Underlines:</div>
<div style="position:absolute;left:580.3px;top:393.3px;width:35.9px;height:23.3px;background:#8686f0;border-radius:3px;box-shadow:inset 0 0 0 1px #55556a"></div>
<div style="position:absolute;left:628.3px;top:397.0px;width:15.5px;height:15.5px;background:#3b7ff2;border-radius:3.5px"></div><svg style="position:absolute;left:628.1px;top:396.8px" width="16" height="16" viewBox="0 0 16 16"><path d="M3.6 8.3 L6.6 11.4 L12.2 3.9" fill="none" stroke="#fff" stroke-width="2" stroke-linecap="round" stroke-linejoin="round"/></svg>
<div style="position:absolute;top:396.9px;font-size:15.50px;line-height:15.50px;color:#2b2b2b;white-space:nowrap;left:651.2px;">Use custom underline color</div>
<div style="position:absolute;top:429.6px;font-size:15.50px;line-height:15.50px;color:#2b2b2b;white-space:nowrap;right:496.8px;">Links:</div>
<div style="position:absolute;left:580.3px;top:426.4px;width:35.9px;height:23.3px;background:#4a8ae9;border-radius:3px;box-shadow:inset 0 0 0 1px #4a5a70"></div>
<div style="position:absolute;top:463.2px;font-size:15.50px;line-height:15.50px;color:#2b2b2b;white-space:nowrap;right:496.8px;">Faint text:</div>
<div style="position:absolute;left:582.6px;top:469.7px;width:142.4px;height:4.0px;background:#d8d8d7;border-radius:2px"></div>
<div style="position:absolute;left:582.6px;top:469.7px;width:70.0px;height:4.0px;background:#3b7ff2;border-radius:2px"></div>
<div style="position:absolute;left:641.1px;top:460.2px;width:23.0px;height:23.0px;background:#fff;border-radius:50%;box-shadow:0 0 0 0.5px rgba(0,0,0,.18),0 1px 2px rgba(0,0,0,.25)"></div>
<div style="position:absolute;left:727.7px;top:460.0px;width:33.6px;height:22.4px;background:#fff;box-shadow:0 0 0 0.5px rgba(0,0,0,.12)"></div><div style="position:absolute;top:463.3px;font-size:15.50px;line-height:15.50px;color:#262626;white-space:nowrap;left:733.2px;">50</div>
<div style="position:absolute;left:765.5px;top:459.8px;width:16.0px;height:23.0px;background:#fff;border-radius:5px;box-shadow:0 0 0 0.5px rgba(0,0,0,.15),0 0.5px 1px rgba(0,0,0,.2)"></div><svg style="position:absolute;left:765.5px;top:459.8px" width="16" height="23" viewBox="0 0 16 23"><path d="M4.2 7.6 L8 4.2 L11.8 7.6" fill="none" stroke="#262626" stroke-width="1.5"/><path d="M4.2 15.4 L8 18.8 L11.8 15.4" fill="none" stroke="#262626" stroke-width="1.5"/><line x1="1" y1="11.5" x2="15" y2="11.5" stroke="#e6e6e6" stroke-width="1"/></svg>
<div style="position:absolute;top:486.8px;font-size:10.90px;line-height:10.90px;color:#3a3a3a;white-space:nowrap;left:582.6px;">Transparent</div>
<div style="position:absolute;top:487.0px;font-size:10.60px;line-height:10.60px;color:#3a3a3a;white-space:nowrap;left:686.6px;">Opaque</div>
<div style="position:absolute;top:515.9px;font-size:15.50px;line-height:15.50px;color:#2b2b2b;white-space:nowrap;right:496.8px;">Minimum Contrast:</div>
<div style="position:absolute;left:582.6px;top:521.5px;width:142.4px;height:4.0px;background:#d8d8d7;border-radius:2px"></div>
<div style="position:absolute;left:582.8px;top:512.0px;width:23.0px;height:23.0px;background:#fff;border-radius:50%;box-shadow:0 0 0 0.5px rgba(0,0,0,.18),0 1px 2px rgba(0,0,0,.25)"></div>
<div style="position:absolute;left:727.7px;top:512.3px;width:33.6px;height:22.4px;background:#fff;box-shadow:0 0 0 0.5px rgba(0,0,0,.12)"></div><div style="position:absolute;top:515.6px;font-size:15.50px;line-height:15.50px;color:#262626;white-space:nowrap;left:733.2px;">0</div>
<div style="position:absolute;left:765.5px;top:512.1px;width:16.0px;height:23.0px;background:#fff;border-radius:5px;box-shadow:0 0 0 0.5px rgba(0,0,0,.15),0 0.5px 1px rgba(0,0,0,.2)"></div><svg style="position:absolute;left:765.5px;top:512.1px" width="16" height="23" viewBox="0 0 16 23"><path d="M4.2 7.6 L8 4.2 L11.8 7.6" fill="none" stroke="#262626" stroke-width="1.5"/><path d="M4.2 15.4 L8 18.8 L11.8 15.4" fill="none" stroke="#262626" stroke-width="1.5"/><line x1="1" y1="11.5" x2="15" y2="11.5" stroke="#e6e6e6" stroke-width="1"/></svg>
<div style="position:absolute;top:579.2px;font-size:15.50px;line-height:15.50px;color:#2b2b2b;white-space:nowrap;right:496.8px;">Search results:</div>
<div style="position:absolute;left:580.3px;top:576.0px;width:35.9px;height:22.4px;background:#fdfa5b;border-radius:3px;box-shadow:inset 0 0 0 1px #70703a"></div>
<div style="position:absolute;top:611.9px;font-size:15.50px;line-height:15.50px;color:#2b2b2b;white-space:nowrap;right:496.8px;">Selection:</div>
<div style="position:absolute;top:611.9px;font-size:15.50px;line-height:15.50px;color:#2b2b2b;white-space:nowrap;left:582.6px;">Background</div>
<div style="position:absolute;left:674.0px;top:608.7px;width:35.5px;height:23.3px;background:#c1d9f9;border-radius:3px;box-shadow:inset 0 0 0 1px #6a7280"></div>
<div style="position:absolute;top:611.9px;font-size:15.50px;line-height:15.50px;color:#2b2b2b;white-space:nowrap;left:739.8px;">Foreground</div>
<div style="position:absolute;left:829.0px;top:608.7px;width:35.4px;height:23.3px;background:#000000;border-radius:3px;box-shadow:inset 0 0 0 1px #444"></div>
<div style="position:absolute;left:582.6px;top:640.0px;width:15.5px;height:15.5px;background:#3b7ff2;border-radius:3.5px"></div><svg style="position:absolute;left:582.4px;top:639.8px" width="16" height="16" viewBox="0 0 16 16"><path d="M3.6 8.3 L6.6 11.4 L12.2 3.9" fill="none" stroke="#fff" stroke-width="2" stroke-linecap="round" stroke-linejoin="round"/></svg>
<div style="position:absolute;top:639.9px;font-size:15.50px;line-height:15.50px;color:#2b2b2b;white-space:nowrap;left:605.5px;">Use custom color for selected text</div>
<div style="position:absolute;left:396.0px;top:663.0px;width:630.0px;height:33.4px;overflow:hidden">
<div style="position:absolute;left:259.0px;top:14.3px;width:35.0px;height:30.7px;background:#15171a;border-radius:3px;box-shadow:inset 0 0 0 1px #444"></div>
<div style="position:absolute;left:308.4px;top:14.3px;width:35.9px;height:30.7px;background:#6b6b6b;border-radius:3px;box-shadow:inset 0 0 0 1px #555"></div>
<svg style="position:absolute;left:0;top:0" width="630" height="40" viewBox="527 1085 630 40"><circle cx="1001" cy="1211.3" r="113" fill="none" stroke="#2a2a2a" stroke-width="1.2"/><circle cx="1001" cy="1215" r="101" fill="none" stroke="#8a8a8a" stroke-width="1"/><line x1="1001" y1="1098" x2="1001" y2="1125" stroke="#555" stroke-width="1"/></svg>
</div>
<div style="position:absolute;top:679.6px;font-size:15.50px;line-height:15.50px;color:#2b2b2b;white-space:nowrap;right:496.8px;">ANSI Colors:</div>
<div style="position:absolute;top:681.9px;font-size:15.50px;line-height:15.50px;color:#2b2b2b;white-space:nowrap;left:583.0px;">Black</div>
</div>
</body></html>
